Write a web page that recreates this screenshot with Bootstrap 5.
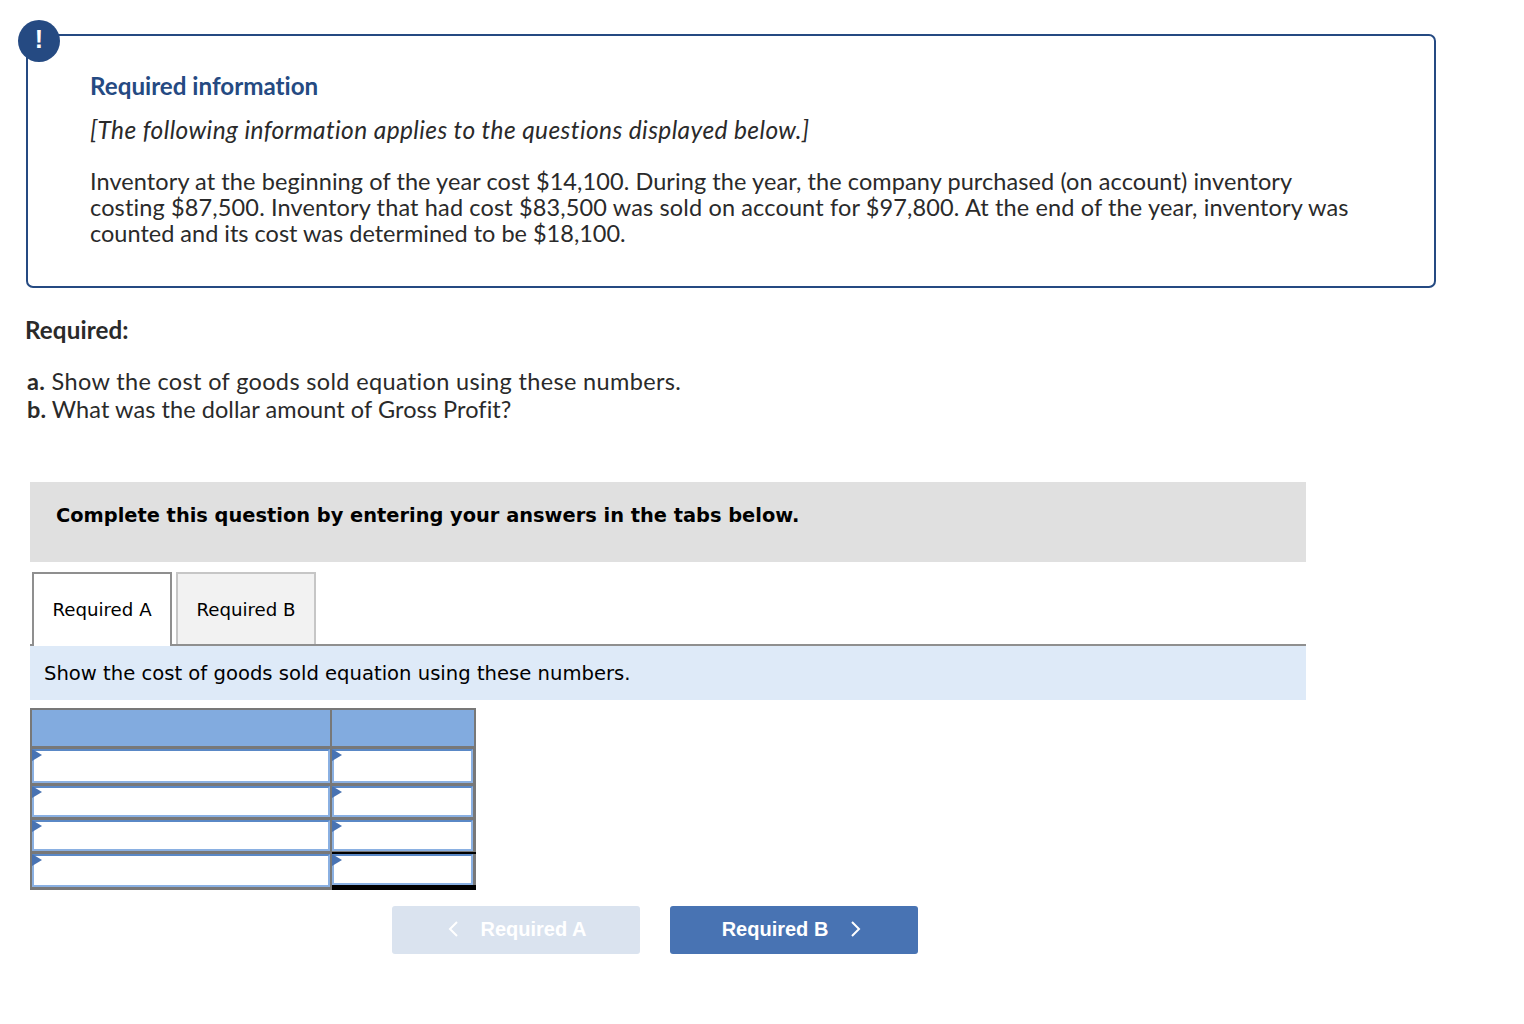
<!DOCTYPE html>
<html lang="en">
<head>
<meta charset="utf-8">
<title>Required information</title>
<link href="https://cdn.jsdelivr.net/npm/bootstrap@5.3.0/dist/css/bootstrap.min.css" rel="stylesheet">
<style>
body{background:#fff;color:#2a2a2a;font-family:"Lato","Open Sans",sans-serif;font-size:23.5px;margin:0;font-variant-ligatures:none}
.page-wrap{padding:34px 0 0 26px;width:1436px}
.info-box{border:2px solid #254a82;border-radius:7px;height:254px;padding:36px 70px 0 62px;position:relative}
.info-badge{position:absolute;left:-10px;top:-16px;width:42px;height:42px;border-radius:50%;background:#254a82;color:#fff;font:700 25px/38px "Liberation Sans",sans-serif;text-align:center}
.info-title{font-weight:700;color:#254a82;font-size:24.2px;line-height:28px;margin:0 0 16px}
.info-ital{font-style:italic;font-size:24.5px;letter-spacing:.4px;line-height:28px;margin:0 0 24px}
.info-body{line-height:26px;margin:0}
.text-line{display:block;white-space:nowrap}
.sp-1{letter-spacing:.09px}
.sp-2{letter-spacing:.14px}
.req-head{font-weight:700;font-size:24.2px;letter-spacing:.1px;line-height:28px;margin:28px 0 23px -1px}
.req-list{line-height:28px;margin:0 0 59px 1px}
.line-a{letter-spacing:.35px}
.line-b{letter-spacing:.07px}
.verd{font-family:"DejaVu Sans",sans-serif;color:#000}
.work{margin-left:4px;width:1276px}
.instr{background:#e0e0e0;height:80px;padding:21px 26px 0;font-weight:700;font-size:19.4px;line-height:26px}
.tab-row{margin-top:10px;padding-left:2px;gap:4px;border-bottom:2px solid #8f8f8f;height:74px}
.tab-a,.tab-b{width:140px;height:74px;font-size:18.2px;line-height:72px;text-align:center;border-style:solid;border-width:2px 2px 0}
.tab-a{background:#fff;border-color:#8f8f8f;margin-bottom:-2px}
.tab-b{background:#f2f2f2;border-color:#c6c6c6;height:72px}
.tab-desc{background:#deeaf8;height:54px;padding:1px 0 0 14px;font-size:19.6px;line-height:54px}
.sheet{display:grid;grid-template-columns:298px 144px;grid-template-rows:37px 37px 34px 34px 36px;width:446px;height:182px;margin-top:8px;background:#787878;border:2px solid #787878}
.head-cell{background:#82abdf;border-bottom:1px solid #787878}
.head-cell+.head-cell{border-left:2px solid #787878}
.input-cell{background:#fff;border:2px solid #8ab0e2;border-top-color:#5a88c6;margin:2px 0 1px 0;position:relative}
.input-cell.rgt{margin:2px 1px 1px 2px}
.input-cell::before{content:"";position:absolute;left:-2px;top:-2px;border-left:10px solid #4873b3;border-top:6px solid transparent;border-bottom:6px solid transparent}
.blk-wrap{background:#787878;border-top:2px solid #000;border-bottom:5px solid #000;margin:0 -2px -2px 2px;padding-right:3px}
.blk-wrap .input-cell{margin:0;height:100%}
.nav-btns{padding:16px 0 0 362px;gap:30px}
.step-btn{width:248px;height:48px;border:0;border-radius:3px;color:#fff;font:700 20px/44px "Liberation Sans",sans-serif;padding:0 0 2px;gap:22px}
.step-off{background:#dae3ef;padding-left:1px}
.step-on{background:#4873b3;padding-right:4px}
.step-btn svg{width:12px;height:20px;fill:none;stroke:#fff;stroke-width:2}
</style>
</head>
<body>
<div class="page-wrap">
  <div class="info-box">
    <div class="info-badge">!</div>
    <p class="info-title">Required information</p>
    <p class="info-ital">[The following information applies to the questions displayed below.]</p>
    <p class="info-body"><span class="text-line sp-1">Inventory at the beginning of the year cost $14,100. During the year, the company purchased (on account) inventory</span> <span class="text-line sp-2">costing $87,500. Inventory that had cost $83,500 was sold on account for $97,800. At the end of the year, inventory was</span> <span class="text-line">counted and its cost was determined to be $18,100.</span></p>
  </div>
  <p class="req-head">Required:</p>
  <div class="req-list"><span class="line-a"><b>a.</b> Show the cost of goods sold equation using these numbers.</span><br><span class="line-b"><b>b.</b> What was the dollar amount of Gross Profit?</span></div>
  <div class="work verd">
    <div class="instr">Complete this question by entering your answers in the tabs below.</div>
    <div class="tab-row d-flex">
      <div class="tab-a">Required A</div>
      <div class="tab-b">Required B</div>
    </div>
    <div class="tab-desc">Show the cost of goods sold equation using these numbers.</div>
    <div class="sheet">
      <div class="head-cell"></div><div class="head-cell"></div>
      <div class="input-cell"></div><div class="input-cell rgt"></div>
      <div class="input-cell"></div><div class="input-cell rgt"></div>
      <div class="input-cell"></div><div class="input-cell rgt"></div>
      <div class="input-cell"></div><div class="blk-wrap"><div class="input-cell"></div></div>
    </div>
    <div class="nav-btns d-flex">
      <button class="step-btn step-off d-flex align-items-center justify-content-center" type="button"><svg viewBox="0 0 12 20"><path d="M10 3 3 10l7 7"/></svg><span>Required A</span></button>
      <button class="step-btn step-on d-flex align-items-center justify-content-center" type="button"><span>Required B</span><svg viewBox="0 0 12 20"><path d="M2 3l7 7-7 7"/></svg></button>
    </div>
  </div>
</div>
<script src="https://cdn.jsdelivr.net/npm/bootstrap@5.3.0/dist/js/bootstrap.bundle.min.js"></script>
</body>
</html>
